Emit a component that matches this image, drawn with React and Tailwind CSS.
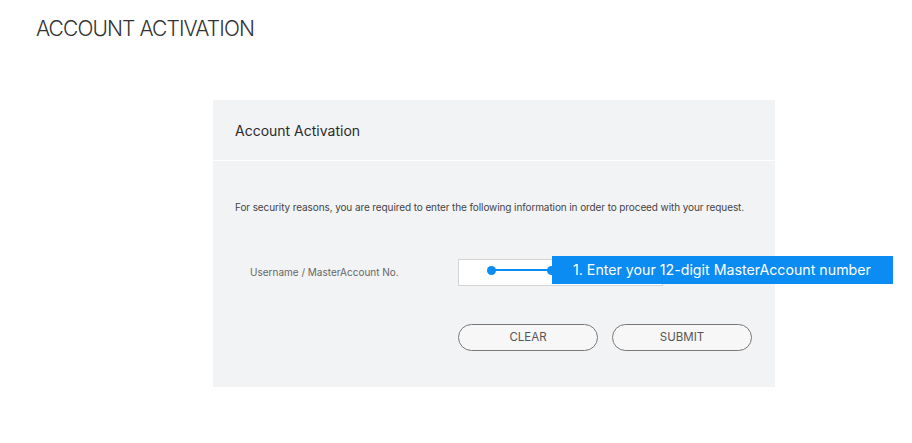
import React from "react";

export default function App() {
  return (
    <div className="w-[912px] h-[443px] bg-white overflow-hidden" style={{ fontFamily: "Inter, 'Liberation Sans', sans-serif" }}>
      <div className="pl-[36px] pt-[16px] text-[21px] leading-[25px] text-[#333] font-light tracking-[-0.9px]">
        ACCOUNT ACTIVATION
      </div>
      <div className="ml-[213px] mt-[59px] w-[562px] h-[287px] bg-[#f2f3f5] flex flex-col">
        <div className="h-[61px] flex items-center pl-[22px] pt-[1px] text-[14px] text-[#2b2b2b] border-b border-white">
          Account Activation
        </div>
        <div className="pl-[22px] pt-[39px] text-[10px] text-[#444] leading-[14px] tracking-[-0.1px]">
          For security reasons, you are required to enter the following information in order to proceed with your request.
        </div>
        <div className="flex items-center mt-[45px]">
          <div className="w-[245px] pl-[37px] text-[10px] text-[#666]">Username / MasterAccount No.</div>
          <div className="relative w-[205px] h-[27px] bg-white border border-[#d4d4d4]">
            <div className="absolute left-[28px] top-[6px] w-[9px] h-[9px] rounded-full bg-[#0b8cf2]"></div>
            <div className="absolute left-[32px] top-[9px] w-[60px] h-[2px] bg-[#0b8cf2]"></div>
            <div className="absolute left-[88px] top-[6px] w-[9px] h-[9px] rounded-full bg-[#0b8cf2]"></div>
          </div>
        </div>
        <div className="flex gap-[14px] ml-[245px] mt-[38px]">
          <button className="w-[140px] h-[27px] rounded-full border border-[#777] bg-[#f7f7f8] text-[11.5px] text-[#555]">CLEAR</button>
          <button className="w-[140px] h-[27px] rounded-full border border-[#777] bg-[#f7f7f8] text-[11.5px] text-[#555]">SUBMIT</button>
        </div>
      </div>
      <div className="absolute left-[552px] top-[256px] w-[341px] h-[28px] bg-[#0b8cf2] text-white text-[14.2px] flex items-center pl-[21px]">
        1. Enter your 12-digit MasterAccount number
      </div>
    </div>
  );
}
